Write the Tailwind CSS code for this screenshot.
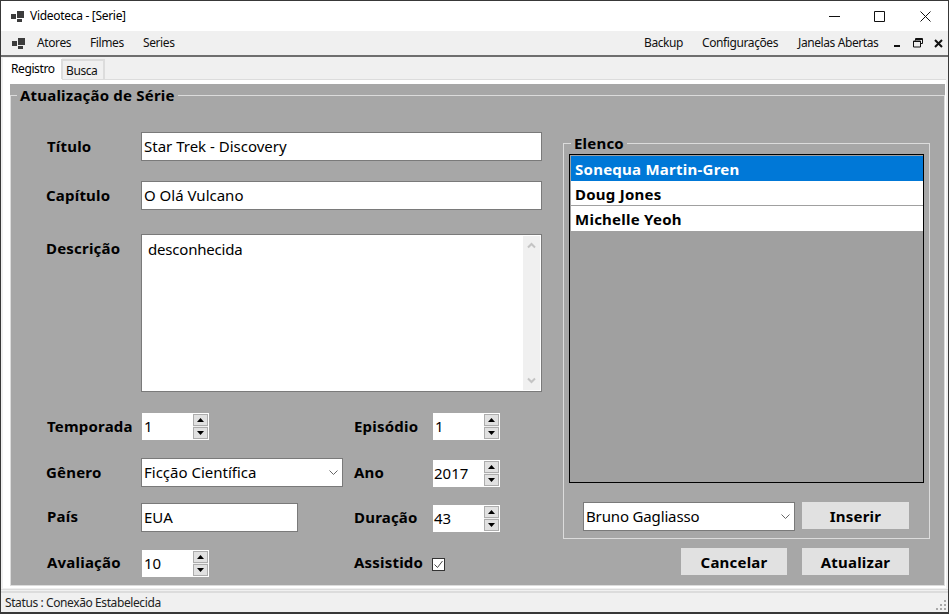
<!DOCTYPE html>
<html lang="en">
<head>
<meta charset="UTF-8">
<title>Videoteca - [Serie]</title>
<script src="https://cdn.jsdelivr.net/npm/@tailwindcss/browser@4"></script>
</head>
<body class="w-[949px] h-[614px] overflow-hidden bg-[#f0f0f0] font-['Noto_Sans',sans-serif] text-black">
<div class="w-full h-full flex flex-col border border-[#383838] border-b-2">

  <!-- title bar -->
  <div class="h-[30px] shrink-0 bg-white flex items-center relative">
    <svg class="ml-[10px] w-[13px] h-[13px]" viewBox="0 0 13 13"><path fill="#3c3c3c" d="M0 4h5v5H0zM6 1h7v7H6zM6 9h5v3H6z"/></svg>
    <span class="ml-[6px] text-[12px] tracking-[-0.3px] leading-none">Videoteca - [Serie]</span>
    <div class="ml-auto flex items-center">
      <svg class="w-[11px] h-[11px] mr-[34px]" viewBox="0 0 11 11"><path stroke="#111" d="M0 5.5h11"/></svg>
      <svg class="w-[11px] h-[11px] mr-[35px]" viewBox="0 0 11 11"><path fill="none" stroke="#111" d="M.5.5h10v10H.5z"/></svg>
      <svg class="w-[11px] h-[11px] mr-[17px]" viewBox="0 0 11 11"><path stroke="#111" d="M.5.5l10 10M10.5.5l-10 10"/></svg>
    </div>
  </div>

  <!-- menu -->
  <div class="h-[24px] shrink-0 flex items-center text-[12px] tracking-[-0.4px] text-[#111]">
    <svg class="ml-[11px] w-[13px] h-[13px]" viewBox="0 0 13 13"><path fill="#3c3c3c" d="M0 4h5v5H0zM6 1h7v7H6zM6 9h5v3H6z"/></svg>
    <span class="ml-[12px] w-[53px]">Atores</span>
    <span class="w-[53px]">Filmes</span>
    <span>Series</span>
    <span class="ml-auto w-[58px]">Backup</span>
    <span class="w-[96px]">Configurações</span>
    <span class="w-[96px]">Janelas Abertas</span>
    <svg class="w-[6px] h-[10px] mr-[13px]" viewBox="0 0 6 10"><path fill="#111" d="M0 7h6v2H0z"/></svg>
    <svg class="w-[10px] h-[10px] mr-[11px]" viewBox="0 0 10 10"><path fill="none" stroke="#111" d="M2.5 2.5V.5h7v5h-2M.5 3h7v6h-7z"/><path stroke="#111" d="M1 3.5h6M3 1.5h6"/></svg>
    <svg class="w-[9px] h-[9px] mr-[5px]" viewBox="0 0 9 9"><path stroke="#111" stroke-width="2" d="M1 1l7 7M8 1L1 8"/></svg>
  </div>
  <div class="h-[2px] shrink-0 bg-[#6e6e6e]"></div>

  <!-- tabs -->
  <div class="h-[22px] shrink-0 flex items-end pl-[2px] relative z-10 text-[12px] tracking-[-0.4px]">
    <div class="w-[59px] h-[22px] bg-white pl-[8px] pt-[2px] -mb-[1px]">Registro</div>
    <div class="w-[44px] h-[20px] border-2 border-b-0 border-[#dcdcdc] pl-[3px] pt-[1px] text-[#111] -ml-[1px]">Busca</div>
  </div>

  <!-- tab page -->
  <div class="h-[509px] shrink-0 mx-[2px] bg-white border-t border-[#dcdcdc] px-[7px] pt-[4px] pb-[2px]">
    <div class="h-[502px] w-[935px] bg-[#a7a7a7] relative flex">
      <!-- group frame, lies over the panel -->
      <div class="absolute left-0 right-0 top-[11px] bottom-0 border border-[#dcdcdc]"></div>
      <div class="absolute left-[7px] top-0 px-[3px] bg-[#a7a7a7] text-[15px] font-bold tracking-[0.2px] leading-[22px]">Atualização de Série</div>

      <!-- left column -->
      <div class="relative w-[497px] ml-[36px] pt-[48px] flex flex-col shrink-0">
        <div class="flex items-center h-[29px]">
          <span class="w-[95px] text-[15px] font-bold tracking-[0.2px] pl-[1px]">Título</span>
          <div class="w-[401px] h-[29px] bg-white border border-[#7a7a7a] pl-[2px] text-[15px] leading-[27px]">Star Trek - Discovery</div>
        </div>
        <div class="flex items-center h-[29px] mt-[20px]">
          <span class="w-[95px] text-[15px] font-bold tracking-[0.2px]">Capítulo</span>
          <div class="w-[401px] h-[29px] bg-white border border-[#7a7a7a] pl-[2px] text-[15px] leading-[27px]">O Olá Vulcano</div>
        </div>
        <div class="flex h-[158px] mt-[24px]">
          <span class="w-[95px] text-[15px] font-bold tracking-[0.2px] pt-[3px]">Descrição</span>
          <div class="w-[401px] h-[158px] bg-white border border-[#7a7a7a] flex">
            <div class="flex-1 pl-[6px] pt-[3px] text-[15px] tracking-[-0.2px]">desconhecida</div>
            <div class="w-[17px] mr-[1px] my-[1px] bg-[#f0f0f0] flex flex-col justify-between items-center py-[6px]">
              <svg class="w-[9px] h-[7px]" viewBox="0 0 9 7"><path fill="none" stroke="#c4c4c4" stroke-width="2" d="M1 5.5l3.5-3.5L8 5.5"/></svg>
              <svg class="w-[9px] h-[7px]" viewBox="0 0 9 7"><path fill="none" stroke="#c4c4c4" stroke-width="2" d="M1 1.5l3.5 3.5L8 1.5"/></svg>
            </div>
          </div>
        </div>

        <div class="grid grid-cols-[95px_213px_79px_80px] grid-rows-[45px_46px_45px_47px] items-center mt-[12px] text-[15px]">
          <span class="font-bold tracking-[0.2px] pl-[1px] -mt-[1px]">Temporada</span>
          <div class="w-[67px] h-[27px] ml-[1px] bg-white flex justify-between pl-[2px]">
            <span class="leading-[26px]">1</span>
            <div class="w-[15px] mr-[1px] my-[1px] flex flex-col gap-[1px] bg-[#f0f0f0]">
              <div class="h-[12px] bg-[#e1e1e1] border border-[#adadad] flex items-center justify-center"><svg class="w-[7px] h-[4px]" viewBox="0 0 7 4"><path d="M3.5 0L7 4H0z"/></svg></div>
              <div class="h-[12px] bg-[#e1e1e1] border border-[#adadad] flex items-center justify-center"><svg class="w-[7px] h-[4px]" viewBox="0 0 7 4"><path d="M0 0h7L3.5 4z"/></svg></div>
            </div>
          </div>
          <span class="font-bold tracking-[0.2px] -mt-[1px]">Episódio</span>
          <div class="w-[67px] h-[27px] bg-white flex justify-between pl-[1px]">
            <span class="pl-[1px] leading-[26px]">1</span>
            <div class="w-[15px] mr-[1px] my-[1px] flex flex-col gap-[1px] bg-[#f0f0f0]">
              <div class="h-[12px] bg-[#e1e1e1] border border-[#adadad] flex items-center justify-center"><svg class="w-[7px] h-[4px]" viewBox="0 0 7 4"><path d="M3.5 0L7 4H0z"/></svg></div>
              <div class="h-[12px] bg-[#e1e1e1] border border-[#adadad] flex items-center justify-center"><svg class="w-[7px] h-[4px]" viewBox="0 0 7 4"><path d="M0 0h7L3.5 4z"/></svg></div>
            </div>
          </div>

          <span class="font-bold tracking-[0.2px]">Gênero</span>
          <div class="w-[202px] h-[29px] bg-white border border-[#7a7a7a] pl-[2px] leading-[27px] flex justify-between">
            <span>Ficção Científica</span>
            <svg class="w-[9px] h-[5px] mr-[4px] mt-[11px]" viewBox="0 0 9 5"><path fill="none" stroke="#666" d="M.5.5l4 4 4-4"/></svg>
          </div>
          <span class="font-bold tracking-[0.2px]">Ano</span>
          <div class="w-[67px] h-[27px] mt-[2px] bg-white flex justify-between pl-[1px]">
            <span class="leading-[26px]">2017</span>
            <div class="w-[15px] mr-[1px] my-[1px] flex flex-col gap-[1px] bg-[#f0f0f0]">
              <div class="h-[12px] bg-[#e1e1e1] border border-[#adadad] flex items-center justify-center"><svg class="w-[7px] h-[4px]" viewBox="0 0 7 4"><path d="M3.5 0L7 4H0z"/></svg></div>
              <div class="h-[12px] bg-[#e1e1e1] border border-[#adadad] flex items-center justify-center"><svg class="w-[7px] h-[4px]" viewBox="0 0 7 4"><path d="M0 0h7L3.5 4z"/></svg></div>
            </div>
          </div>

          <span class="font-bold tracking-[0.2px] pl-[1px] -mt-[3px]">País</span>
          <div class="w-[157px] h-[29px] bg-white border border-[#7a7a7a] pl-[2px] leading-[27px]">EUA</div>
          <span class="font-bold tracking-[0.2px]">Duração</span>
          <div class="w-[67px] h-[27px] mt-[2px] bg-white flex justify-between pl-[1px]">
            <span class="leading-[26px]">43</span>
            <div class="w-[15px] mr-[1px] my-[1px] flex flex-col gap-[1px] bg-[#f0f0f0]">
              <div class="h-[12px] bg-[#e1e1e1] border border-[#adadad] flex items-center justify-center"><svg class="w-[7px] h-[4px]" viewBox="0 0 7 4"><path d="M3.5 0L7 4H0z"/></svg></div>
              <div class="h-[12px] bg-[#e1e1e1] border border-[#adadad] flex items-center justify-center"><svg class="w-[7px] h-[4px]" viewBox="0 0 7 4"><path d="M0 0h7L3.5 4z"/></svg></div>
            </div>
          </div>

          <span class="font-bold tracking-[0.2px] pl-[1px] -mt-[2px]">Avaliação</span>
          <div class="w-[67px] h-[27px] ml-[1px] bg-white flex justify-between pl-[2px]">
            <span class="leading-[26px]">10</span>
            <div class="w-[15px] mr-[1px] my-[1px] flex flex-col gap-[1px] bg-[#f0f0f0]">
              <div class="h-[12px] bg-[#e1e1e1] border border-[#adadad] flex items-center justify-center"><svg class="w-[7px] h-[4px]" viewBox="0 0 7 4"><path d="M3.5 0L7 4H0z"/></svg></div>
              <div class="h-[12px] bg-[#e1e1e1] border border-[#adadad] flex items-center justify-center"><svg class="w-[7px] h-[4px]" viewBox="0 0 7 4"><path d="M0 0h7L3.5 4z"/></svg></div>
            </div>
          </div>
          <span class="font-bold tracking-[0.2px] -mt-[2px]">Assistido</span>
          <div class="w-[13px] h-[13px] -ml-[1px] mt-[1px] bg-white border border-[#333] flex items-center justify-center">
            <svg class="w-[11px] h-[11px]" viewBox="0 0 11 11"><path fill="none" stroke="#444" d="M1.5 5.5l3 3 5-6.5"/></svg>
          </div>
        </div>
      </div>

      <!-- right column -->
      <div class="relative flex flex-col ml-[20px] w-[367px] pt-[59px]">
        <div class="h-[396px] border border-[#dcdcdc] relative px-[5px] pt-[10px]">
          <div class="absolute left-[7px] -top-[11px] px-[3px] bg-[#a7a7a7] text-[15px] font-bold tracking-[0.2px] leading-[20px]">Elenco</div>
          <div class="h-[329px] w-[355px] border border-black bg-[#a0a0a0] pl-[1px] pt-[1px] text-[15px] font-bold tracking-[0.25px]">
            <div class="h-[25px] bg-[#0078d7] text-white pl-[4px] leading-[27px]">Sonequa Martin-Gren</div>
            <div class="h-[25px] bg-white border-b border-[#a0a0a0] pl-[4px] leading-[27px]">Doug Jones</div>
            <div class="h-[25px] bg-white pl-[4px] leading-[27px]">Michelle Yeoh</div>
          </div>
          <div class="flex mt-[19px] ml-[14px] items-start">
            <div class="w-[212px] h-[29px] bg-white border border-[#7a7a7a] pl-[2px] text-[15px] tracking-[-0.15px] leading-[27px] flex justify-between">
              <span>Bruno Gagliasso</span>
              <svg class="w-[9px] h-[5px] mr-[4px] mt-[11px]" viewBox="0 0 9 5"><path fill="none" stroke="#666" d="M.5.5l4 4 4-4"/></svg>
            </div>
            <div class="w-[107px] h-[27px] ml-[7px] bg-[#e1e1e1] text-center text-[15px] font-bold tracking-[0.2px] leading-[28px]">Inserir</div>
          </div>
        </div>
        <div class="flex justify-end gap-[15px] mt-[9px] pr-[21px]">
          <div class="w-[106px] h-[27px] bg-[#e1e1e1] text-center text-[15px] font-bold tracking-[0.2px] leading-[28px]">Cancelar</div>
          <div class="w-[107px] h-[27px] bg-[#e1e1e1] text-center text-[15px] font-bold tracking-[0.2px] leading-[28px]">Atualizar</div>
        </div>
      </div>
    </div>
  </div>

  <div class="h-[2px] shrink-0 mt-[1px] border-t border-[#dcdcdc]"></div>
  <!-- status -->
  <div class="flex-1 border-t-2 border-[#dcdcdc] flex items-center pl-[4px] text-[12px] tracking-[-0.4px] text-[#222] relative">
    Status : Conexão Estabelecida
    <svg class="absolute right-[1px] bottom-[1px] w-[11px] h-[11px]" viewBox="0 0 11 11"><path fill="#a8a8a8" d="M8 0h2v2H8zM4 4h2v2H4zM8 4h2v2H8zM0 8h2v2H0zM4 8h2v2H4zM8 8h2v2H8z"/></svg>
  </div>
</div>
</body>
</html>
